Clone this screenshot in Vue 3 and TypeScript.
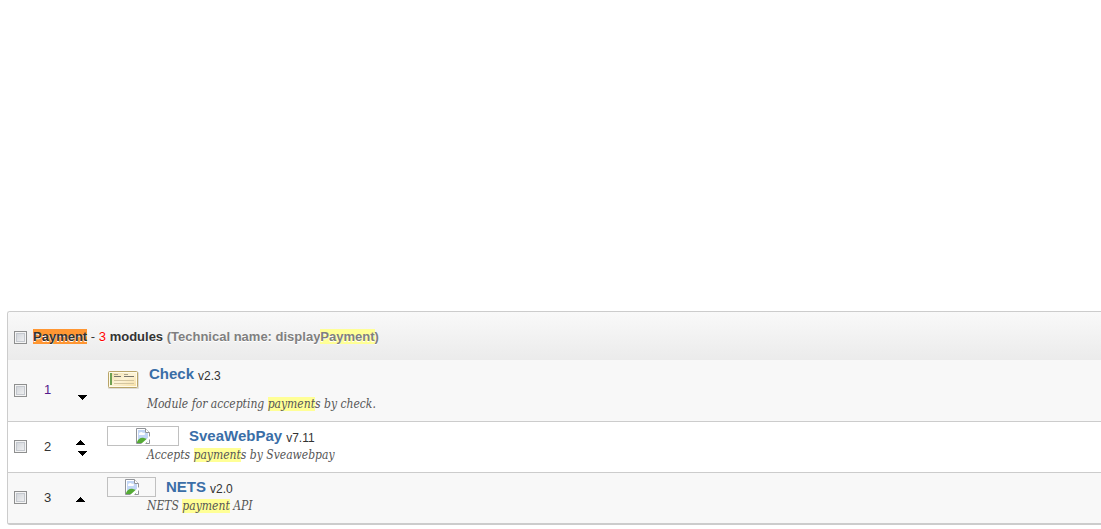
<script setup lang="ts">
import { reactive, ref } from 'vue'

interface Module {
  id: number
  name: string
  version: string
  before: string
  match: string
  after: string
  logo: 'check' | 'wide' | 'narrow'
  up: boolean
  down: boolean
}

const modules: Module[] = [
  { id: 1, name: 'Check', version: 'v2.3', before: 'Module for accepting ', match: 'payment', after: 's by check.', logo: 'check', up: false, down: true },
  { id: 2, name: 'SveaWebPay', version: 'v7.11', before: 'Accepts ', match: 'payment', after: 's by Sveawebpay', logo: 'wide', up: true, down: true },
  { id: 3, name: 'NETS', version: 'v2.0', before: 'NETS ', match: 'payment', after: ' API', logo: 'narrow', up: true, down: false },
]

const all = ref(false)
const selected = reactive<Record<number, boolean>>({ 1: false, 2: false, 3: false })

function toggleAll() {
  modules.forEach((m) => (selected[m.id] = all.value))
}
</script>

<template>
  <main class="page">
    <section class="hook">
      <header class="hook-head">
        <input id="hook-all" v-model="all" type="checkbox" class="tick" @change="toggleAll" />
        <label for="hook-all" class="hook-title"><mark class="current">Payment</mark> <span class="dash">-</span> <span class="count">3</span> modules <span class="technical">(Technical name: display<mark>Payment</mark>)</span></label>
      </header>
      <table class="modules">
        <tbody>
          <tr v-for="m in modules" :key="m.id" :class="{ first: m.id === 1 }">
            <td class="c-tick">
              <input v-model="selected[m.id]" type="checkbox" class="tick" :aria-label="m.name" />
            </td>
            <td class="c-pos" :class="{ visited: m.id === 1 }">{{ m.id }}</td>
            <td class="c-move">
              <div class="moves">
                <a v-if="m.up" href="#" class="move" aria-label="Move up">
                  <svg width="9" height="5" viewBox="0 0 9 5" shape-rendering="crispEdges"><path d="M4 0h1v1h1v1h1v1h1v1h1v1H0V4h1V3h1V2h1V1h1z" /></svg>
                </a>
                <span v-else class="move"></span>
                <a v-if="m.down" href="#" class="move down" aria-label="Move down">
                  <svg width="9" height="5" viewBox="0 0 9 5" shape-rendering="crispEdges"><path d="M0 0h9v1H8v1H7v1H6v1H5v1H4V4H3V3H2V2H1V1H0z" /></svg>
                </a>
              </div>
            </td>
            <td class="c-info">
              <div class="heading">
                <svg v-if="m.logo === 'check'" class="check-logo" width="32" height="20" viewBox="0 0 32 20">
                  <defs>
                    <linearGradient id="paper" x1="0" x2="1" y1="0" y2="1">
                      <stop offset="0" stop-color="#f1dfac" />
                      <stop offset=".5" stop-color="#fdf3d6" />
                      <stop offset="1" stop-color="#f6dfa5" />
                    </linearGradient>
                  </defs>
                  <rect x="1" y="2" width="31" height="17" rx="1" fill="#dedcd6" />
                  <rect x="1.5" y="1.5" width="29" height="16" rx="1" fill="#fffbe9" stroke="#b9a468" />
                  <rect x="3" y="3" width="26" height="13" fill="url(#paper)" />
                  <path d="M3 3h2v12H3z" fill="#6fa052" />
                  <path d="M7 4.500h4M17 4.500h4" stroke="#aaa288" />
                  <path d="M7 6.500h7M17 6.500h10" stroke="#77746b" />
                  <path d="M7 10.500h20M7 13.500h20" stroke="#d3c59f" />
                </svg>
                <span v-else class="missing" :class="m.logo">
                  <svg width="14" height="16" viewBox="0 0 14 16">
                    <path d="M.5.500h9l4 4v11H.5z" fill="#fff" stroke="#919499" />
                    <path d="M2 2h7v3h3v9H2z" fill="#c3d7f6" />
                    <path d="M3 6c0-2 3-3 4-1 2-1 3 2 1 2H4C3 7 3 7 3 6z" fill="#fff" />
                    <path d="M1 14c1-3 4-5 7-4l3 1v4H1z" fill="#55ab35" />
                    <path d="M9.500.500v4h4" fill="#fff" stroke="#919499" />
                    <path d="M14 8v3l-5 5H5z" fill="#fff" />
                  </svg>
                </span>
                <span class="name">{{ m.name }}</span>
                <span class="version">{{ m.version }}</span>
              </div>
              <p class="desc">{{ m.before }}<mark>{{ m.match }}</mark>{{ m.after }}</p>
            </td>
          </tr>
        </tbody>
      </table>
    </section>
  </main>
</template>

<style>
body {
  margin: 0;
  background: #fff;
}
</style>

<style scoped>
.page {
  padding: 311px 0 4px 7px;
  font-family: "Liberation Sans", Arial, sans-serif;
  font-size: 12px;
  color: #333;
}
.hook {
  border: 1px solid #ccc;
  border-right: 0;
  border-bottom-width: 2px;
  border-radius: 3px 0 0 3px;
  overflow: hidden;
}
.hook-head {
  display: flex;
  align-items: center;
  gap: 6px;
  height: 48px;
  padding: 2px 0 0 6px;
  box-sizing: border-box;
  background: linear-gradient(#f9f9f9, #ebebeb);
}
.hook-title {
  font-size: 13px;
  line-height: 16px;
  font-weight: bold;
  text-shadow: 0 1px 0 #fff;
}
.dash {
  font-weight: normal;
}
.count {
  color: #f00;
  font-weight: normal;
}
.technical {
  color: #7f7f7f;
}
mark {
  background: #ffff96;
  color: inherit;
}
mark.current {
  background: #ff9632;
}
.tick {
  appearance: none;
  flex: none;
  display: block;
  width: 13px;
  height: 13px;
  margin: 0;
  border: 1px solid #8e8f8f;
  background: linear-gradient(135deg, #cbcfd5, #f6f6f6);
  box-shadow: inset 0 0 0 1px #f4f4f4, inset 0 0 0 2px #c4c8ce;
}
.tick:checked {
  background: #4a6fa5;
}
.modules {
  width: 100%;
  border-collapse: collapse;
  table-layout: fixed;
}
tr {
  background: #fff;
  border-bottom: 1px solid #ccc;
}
tr:nth-child(odd) {
  background: #f8f8f8;
}
tr:last-child {
  border-bottom: 0;
}
td {
  box-sizing: border-box;
  padding: 0;
  height: 51px;
  vertical-align: middle;
}
.first td {
  height: 61px;
}
.c-tick {
  width: 31px;
  padding-left: 6px;
}
.c-pos {
  width: 17px;
  padding-bottom: 1px;
  text-align: center;
  font-size: 13px;
}
.visited {
  color: #551a8b;
}
.c-move {
  width: 51px;
}
.moves {
  display: flex;
  flex-direction: column;
  padding: 3px 0 0 20px;
}
.move {
  display: flex;
  align-items: center;
  width: 11px;
  height: 11px;
}
.down {
  justify-content: flex-end;
}
td.c-info {
  vertical-align: top;
}
.heading {
  display: flex;
  align-items: center;
  height: 20px;
  margin-top: 4px;
}
.check-logo {
  margin-top: 12px;
}
.missing {
  display: flex;
  align-items: center;
  justify-content: center;
  height: 20px;
  box-sizing: border-box;
  border: 1px solid #c0c0c0;
}
.wide {
  width: 72px;
}
.narrow {
  width: 49px;
}
.name {
  margin: 0 4px 0 10px;
  font-size: 15px;
  line-height: 20px;
  font-weight: bold;
  color: #3a6ea7;
}
.version {
  padding-top: 5px;
  line-height: 17px;
}
.desc {
  margin: 0 0 0 40px;
  font-family: "DejaVu Serif Condensed", "DejaVu Serif", Georgia, serif;
  font-size: 12px;
  line-height: 18px;
  font-style: italic;
  color: #555;
}
.first .desc {
  margin-top: 11px;
}
</style>
